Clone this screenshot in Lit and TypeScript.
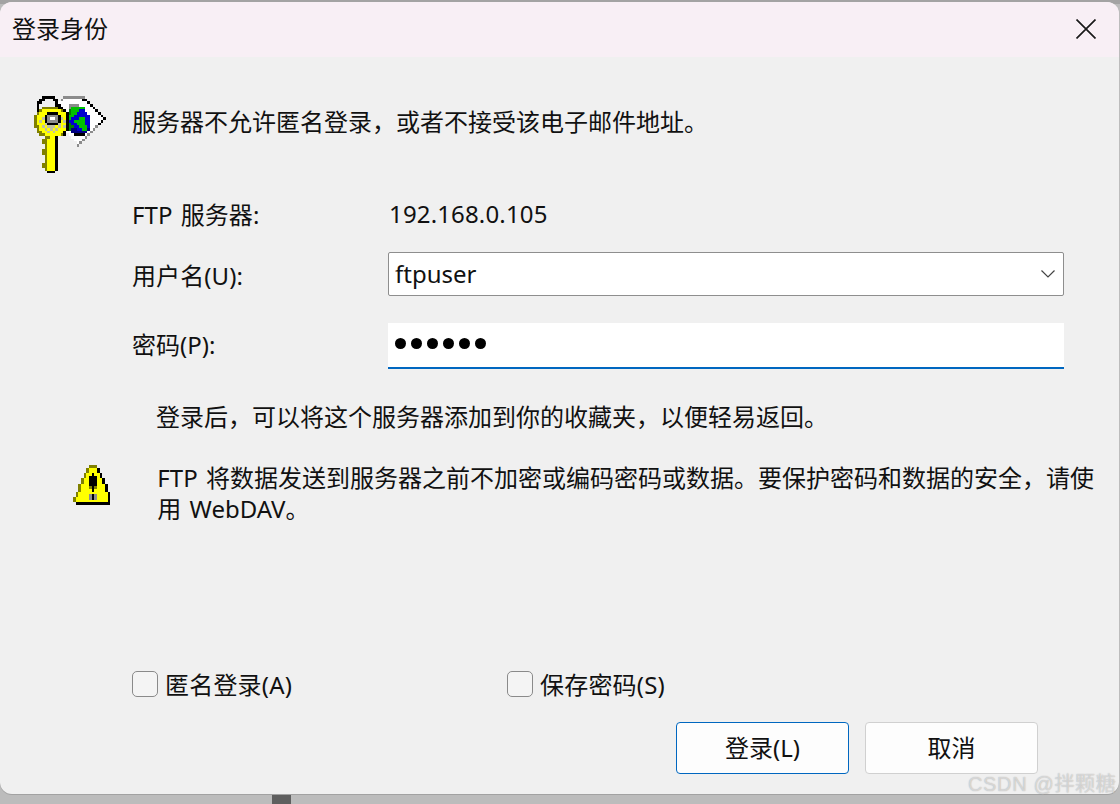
import { LitElement, html, css, svg } from "lit";
import { customElement } from "lit/decorators.js";

const colors: Record<string, string> = {
  K: "#000000", O: "#808000", Y: "#ffff00", W: "#ffffff", G: "#8c8c8c", S: "#c0c0a0",
  B: "#0000d0", D: "#000080", N: "#00c000", M: "#008000",
};

const pixels = (rows: string[]) =>
  rows.flatMap((row, y) =>
    [...row].map((c, x) =>
      colors[c] ? svg`<rect x=${x} y=${y} width="1" height="1" fill=${colors[c]}/>` : null,
    ),
  );

const KEY = [
  "...KKKKK...GGGGGGGG........",
  "..KK...KK.GWWWWWWWKK.......",
  ".KK.....KWWWWWWWWWWWK......",
  ".K......KKWWWGGGGWWWWK.....",
  ".K.OOOOOOKKWWGNNNNNWWWK....",
  ".KOYYYYYYYOKWMNNNBBWWWWK...",
  ".OYYYKKKKYYYKMNNBBBBWWWWK..",
  "OYYYKGGGGKYYKNNBBBBBBWWWWK.",
  "OYYSKGWWGKSYKNBBBNNBBWWWWWK",
  "OYSYKGGGGKYSKBBNNNNBBWWWWK.",
  "OYYYSKKKKSYYKMBBNNNBBWWWK..",
  "OOYSYSSSYSYSKMMBBNNNBWWG...",
  ".OYYSYSYSYYYKMDDBBNNDWG....",
  ".OOYYSYSYYYKWWDDDDDDWG.....",
  "..OOYYYYYYOK.WWKKKKWG......",
  "....OOYYK.....WWWWWG.......",
  "...OOYYYK......WWWG........",
  "...OOYYYK.......WG.........",
  "....OYYYK.......G..........",
  "....OYYYK",
  "...OOYYYK",
  "...OOYYYK",
  "....OYYYK",
  "....OYYYK",
  "....OYYYK",
  "...OOYYYK",
  "...OOYYYK",
  "....OYYYK",
  ".....KKK.",
];

const WARN = [
  "......OOO.....",
  ".....OYYYK....",
  ".....OYYYK....",
  "....OYYKYYK...",
  "....OYKKKYK...",
  "...OYYKKKYYK..",
  "...OYYKKKYYK..",
  "..OYYYKKKYYYK.",
  "..OYYYOKOYYYK.",
  "..OYYYYKYYYYK.",
  ".OYYYYYYYYYYYK",
  ".OYYYYGKGYYYYK",
  "OYYYYYGKGYYYYK",
  "OYYYYYYYYYYYYK",
  ".KKKKKKKKKKKKK",
];

const keyIcon = svg`<svg class="key" viewBox="0 0 27 29" width="72" height="77.33" shape-rendering="crispEdges">${pixels(KEY)}</svg>`;
const warnIcon = svg`<svg class="warn" viewBox="0 0 14 15" width="37.33" height="40" shape-rendering="crispEdges">${pixels(WARN)}</svg>`;

@customElement("app-root")
export class AppRoot extends LitElement {
  static styles = css`
    :host {
      display: block;
      width: 1120px;
      height: 804px;
      overflow: hidden;
      position: relative;
      background: linear-gradient(#a3a3a3 0 4px, #bcbcbc 4px);
      font-family: "Noto Sans", "Noto Sans CJK SC", sans-serif;
      font-size: 24px;
      color: #111;
    }
    .dark {
      position: absolute;
      left: 272px;
      top: 780px;
      width: 19px;
      height: 24px;
      background: #5f5f5f;
    }
    .win {
      position: absolute;
      left: 0;
      top: 2px;
      width: 1119px;
      height: 792px;
      border-radius: 12px;
      background: #f0f0f0;
      overflow: hidden;
      display: flex;
      flex-direction: column;
      box-shadow: 0 1px 0 #a2a2a2;
    }
    .title {
      height: 55px;
      flex: none;
      background: #f8eff5;
      display: flex;
      align-items: center;
      justify-content: space-between;
      padding: 0 23px 2px 12px;
      box-sizing: border-box;
      line-height: 1;
    }
    .title svg { display: block; }
    .body { flex: 1; display: flex; flex-direction: column; padding-bottom: 20px; box-sizing: border-box; }
    .head {
      display: flex;
      align-items: flex-start;
      padding: 39px 0 0 34px;
      height: 143px;
      box-sizing: border-box;
      flex: none;
    }
    .key { flex: none; display: block; }
    .head .msg { margin: 8px 0 0 26px; line-height: 36px; white-space: nowrap; }
    .form {
      margin-left: 132px;
      width: 932px;
      display: grid;
      grid-template-columns: 256px 676px;
      grid-template-rows: 30px 44px 51px;
      row-gap: 22px;
      align-items: center;
      white-space: nowrap;
    }
    .ftp { word-spacing: 2px; letter-spacing: 0.05px; margin-bottom: 4px; }
    .value { padding-left: 1px; letter-spacing: 0.15px; margin-bottom: 4px; }
    .userlabel { letter-spacing: 0.1px; }
    .combo {
      height: 44px;
      box-sizing: border-box;
      background: #fff;
      border: 1px solid #8e8e8e;
      border-radius: 2px;
      display: flex;
      align-items: center;
      justify-content: space-between;
      padding: 0 8px 2px 6px;
    }
    .combo svg { margin-top: 2px; }
    .pwlabel { margin-bottom: 1px; }
    .pw {
      height: 46px;
      box-sizing: border-box;
      background: #fff;
      border-bottom: 2px solid #0067c0;
      display: flex;
      align-items: center;
      gap: 5px;
      padding: 0 0 3px 7px;
      margin-top: 5px;
    }
    .dot { width: 11px; height: 11px; border-radius: 50%; background: #000; }
    .hint { margin: 30px 0 0 156px; line-height: 36px; white-space: nowrap; }
    .warnrow { display: flex; margin: 27px 0 0 73px; }
    .warn { flex: none; display: block; margin-top: 3px; }
    .warntext { margin-left: 47px; width: 940px; line-height: 31px; word-spacing: 2px; }
    .checks { display: flex; margin: auto 0 0 132px; }
    .check { display: flex; align-items: center; gap: 7px; width: 375px; height: 34px; letter-spacing: 0.2px; }
    .label { margin-top: -2px; }
    .box { width: 26px; height: 26px; box-sizing: border-box; border: 1px solid #8a8a8a; border-radius: 5px; background: #f4f4f4; }
    .buttons { display: flex; gap: 16px; margin: 21px 0 0 676px; }
    .btn {
      width: 173px;
      height: 52px;
      box-sizing: border-box;
      background: #fdfdfd;
      border: 1px solid #d0d0d0;
      border-radius: 4px;
      display: flex;
      align-items: center;
      justify-content: center;
      padding-bottom: 4px;
    }
    .btn.primary { border-color: #0067c0; }
    .mark {
      position: absolute;
      left: 968px;
      top: 770px;
      font-family: "Liberation Sans", "Noto Sans CJK SC", sans-serif;
      font-size: 20px;
      letter-spacing: 0.65px;
      line-height: 28px;
      color: rgba(255, 255, 255, 0.5);
      text-shadow: 0 0 1px rgba(110, 110, 110, 0.6);
      white-space: nowrap;
    }
  `;

  render() {
    return html`
      <div class="dark"></div>
      <div class="win">
        <div class="title">
          <span>登录身份</span>
          <svg width="20" height="20" viewBox="0 0 20 20"><path d="M.5.5 19.5 19.5M19.5.5.5 19.5" stroke="#1a1a1a" stroke-width="1.7" fill="none"/></svg>
        </div>
        <div class="body">
          <div class="head">${keyIcon}<div class="msg">服务器不允许匿名登录，或者不接受该电子邮件地址。</div></div>
          <div class="form">
            <div class="ftp">FTP 服务器:</div><div class="value">192.168.0.105</div>
            <div class="userlabel">用户名(U):</div>
            <div class="combo"><span>ftpuser</span>
              <svg width="14" height="8" viewBox="0 0 14 8"><path d="M.5.5 7 7 13.5.5" stroke="#444" stroke-width="1.2" fill="none"/></svg>
            </div>
            <div class="pwlabel">密码(P):</div>
            <div class="pw">${[0, 1, 2, 3, 4, 5].map(() => html`<span class="dot"></span>`)}</div>
          </div>
          <div class="hint">登录后，可以将这个服务器添加到你的收藏夹，以便轻易返回。</div>
          <div class="warnrow">${warnIcon}<div class="warntext">FTP 将数据发送到服务器之前不加密或编码密码或数据。要保护密码和数据的安全，请使用 WebDAV。</div></div>
          <div class="checks">
            <div class="check"><span class="box"></span><span class="label">匿名登录(A)</span></div>
            <div class="check"><span class="box"></span><span class="label">保存密码(S)</span></div>
          </div>
          <div class="buttons">
            <div class="btn primary">登录(L)</div>
            <div class="btn">取消</div>
          </div>
        </div>
      </div>
      <div class="mark">CSDN @拌颗糖</div>
    `;
  }
}
